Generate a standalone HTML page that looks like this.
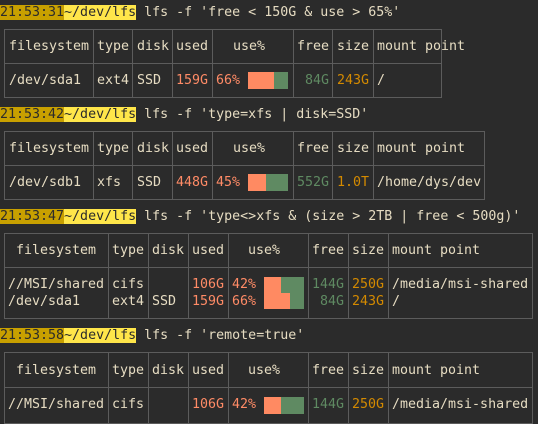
<!DOCTYPE html>
<html><head><meta charset="utf-8"><style>
html,body{margin:0;padding:0;background:#2b2b2b;}
body{width:538px;height:424px;position:relative;overflow:hidden;font-family:"DejaVu Sans Mono","Liberation Mono",monospace;font-size:13.3px;color:#e6dcc2;}
.a{position:absolute;white-space:pre;line-height:17px;height:17px;}
.ts{background:#c8a000;color:#2b2b2b;}
.pa{background:#ffe64a;color:#2b2b2b;}
.t{position:absolute;border:1px solid #5c5c5c;box-sizing:border-box;}
.v{position:absolute;top:0;bottom:0;width:1px;background:#5c5c5c;}
.h{position:absolute;left:0;right:0;height:1px;background:#5c5c5c;}
.u{color:#ff8b66;}
.g{color:#5f8a62;}
.o{color:#d48a00;}
.b{position:absolute;}
.c{background:#ff8a62;}
.gr{background:#5f8a62;}
</style></head><body>

<div class="a" style="left:0;top:4px"><span class="ts">21:53:31</span><span class="pa">~/dev/lfs</span> lfs -f 'free &lt; 150G &amp; use &gt; 65%'</div>
<div class="t" style="left:4px;top:29px;width:438px;height:69px">
<div class="v" style="left:88px"></div><div class="v" style="left:127px"></div><div class="v" style="left:167px"></div><div class="v" style="left:207px"></div><div class="v" style="left:288px"></div><div class="v" style="left:327px"></div><div class="v" style="left:368px"></div>
<div class="h" style="top:33px"></div></div>
<div class="a" style="left:9px;top:38px">filesystem</div><div class="a" style="left:97px;top:38px">type</div><div class="a" style="left:137px;top:38px">disk</div><div class="a" style="left:176px;top:38px">used</div><div class="a" style="left:233px;top:38px">use%</div><div class="a" style="left:297px;top:38px">free</div><div class="a" style="left:337px;top:38px">size</div><div class="a" style="left:377px;top:38px">mount point</div>
<div class="a" style="left:9px;top:72px">/dev/sda1</div><div class="a" style="left:97px;top:72px">ext4</div><div class="a" style="left:137px;top:72px">SSD</div><div class="a u" style="left:176px;top:72px">159G</div><div class="a u" style="left:216px;top:72px">66%</div>
<div class="b c" style="left:248px;top:72px;width:26px;height:17px"></div><div class="b gr" style="left:274px;top:72px;width:14px;height:17px"></div>
<div class="a g" style="left:305px;top:72px">84G</div><div class="a o" style="left:337px;top:72px">243G</div><div class="a" style="left:377px;top:72px">/</div>

<div class="a" style="left:0;top:106px"><span class="ts">21:53:42</span><span class="pa">~/dev/lfs</span> lfs -f 'type=xfs | disk=SSD'</div>
<div class="t" style="left:4px;top:131px;width:481px;height:69px">
<div class="v" style="left:88px"></div><div class="v" style="left:127px"></div><div class="v" style="left:167px"></div><div class="v" style="left:207px"></div><div class="v" style="left:288px"></div><div class="v" style="left:327px"></div><div class="v" style="left:368px"></div>
<div class="h" style="top:33px"></div></div>
<div class="a" style="left:9px;top:140px">filesystem</div><div class="a" style="left:97px;top:140px">type</div><div class="a" style="left:137px;top:140px">disk</div><div class="a" style="left:176px;top:140px">used</div><div class="a" style="left:233px;top:140px">use%</div><div class="a" style="left:297px;top:140px">free</div><div class="a" style="left:337px;top:140px">size</div><div class="a" style="left:377px;top:140px">mount point</div>
<div class="a" style="left:9px;top:174px">/dev/sdb1</div><div class="a" style="left:97px;top:174px">xfs</div><div class="a" style="left:137px;top:174px">SSD</div><div class="a u" style="left:176px;top:174px">448G</div><div class="a u" style="left:216px;top:174px">45%</div>
<div class="b c" style="left:248px;top:174px;width:18px;height:17px"></div><div class="b gr" style="left:266px;top:174px;width:22px;height:17px"></div>
<div class="a g" style="left:297px;top:174px">552G</div><div class="a o" style="left:337px;top:174px">1.0T</div><div class="a" style="left:377px;top:174px">/home/dys/dev</div>

<div class="a" style="left:0;top:208px"><span class="ts">21:53:47</span><span class="pa">~/dev/lfs</span> lfs -f 'type&lt;&gt;xfs &amp; (size &gt; 2TB | free &lt; 500g)'</div>
<div class="t" style="left:4px;top:233px;width:529px;height:86px">
<div class="v" style="left:103px"></div><div class="v" style="left:143px"></div><div class="v" style="left:183px"></div><div class="v" style="left:223px"></div><div class="v" style="left:303px"></div><div class="v" style="left:343px"></div><div class="v" style="left:383px"></div>
<div class="h" style="top:33px"></div></div>
<div class="a" style="left:16px;top:242px">filesystem</div><div class="a" style="left:112px;top:242px">type</div><div class="a" style="left:152px;top:242px">disk</div><div class="a" style="left:192px;top:242px">used</div><div class="a" style="left:248px;top:242px">use%</div><div class="a" style="left:312px;top:242px">free</div><div class="a" style="left:352px;top:242px">size</div><div class="a" style="left:392px;top:242px">mount point</div>
<div class="a" style="left:8px;top:276px">//MSI/shared
/dev/sda1</div><div class="a" style="left:112px;top:276px">cifs
ext4</div><div class="a" style="left:152px;top:293px">SSD</div><div class="a u" style="left:192px;top:276px">106G
159G</div><div class="a u" style="left:232px;top:276px">42%
66%</div>
<div class="b c" style="left:264px;top:277px;width:17px;height:16px"></div><div class="b gr" style="left:281px;top:277px;width:23px;height:16px"></div>
<div class="b c" style="left:264px;top:293px;width:26px;height:16px"></div><div class="b gr" style="left:290px;top:293px;width:14px;height:16px"></div>
<div class="a g" style="left:312px;top:276px">144G
 84G</div><div class="a o" style="left:352px;top:276px">250G
243G</div><div class="a" style="left:392px;top:276px">/media/msi-shared
/</div>

<div class="a" style="left:0;top:327px"><span class="ts">21:53:58</span><span class="pa">~/dev/lfs</span> lfs -f 'remote=true'</div>
<div class="t" style="left:4px;top:352px;width:529px;height:72px">
<div class="v" style="left:103px"></div><div class="v" style="left:143px"></div><div class="v" style="left:183px"></div><div class="v" style="left:223px"></div><div class="v" style="left:303px"></div><div class="v" style="left:343px"></div><div class="v" style="left:383px"></div>
<div class="h" style="top:34px"></div></div>
<div class="a" style="left:16px;top:362px">filesystem</div><div class="a" style="left:112px;top:362px">type</div><div class="a" style="left:152px;top:362px">disk</div><div class="a" style="left:192px;top:362px">used</div><div class="a" style="left:248px;top:362px">use%</div><div class="a" style="left:312px;top:362px">free</div><div class="a" style="left:352px;top:362px">size</div><div class="a" style="left:392px;top:362px">mount point</div>
<div class="a" style="left:8px;top:396px">//MSI/shared</div><div class="a" style="left:112px;top:396px">cifs</div><div class="a u" style="left:192px;top:396px">106G</div><div class="a u" style="left:232px;top:396px">42%</div>
<div class="b c" style="left:264px;top:397px;width:17px;height:17px"></div><div class="b gr" style="left:281px;top:397px;width:23px;height:17px"></div>
<div class="a g" style="left:312px;top:396px">144G</div><div class="a o" style="left:352px;top:396px">250G</div><div class="a" style="left:392px;top:396px">/media/msi-shared</div>
</body></html>
